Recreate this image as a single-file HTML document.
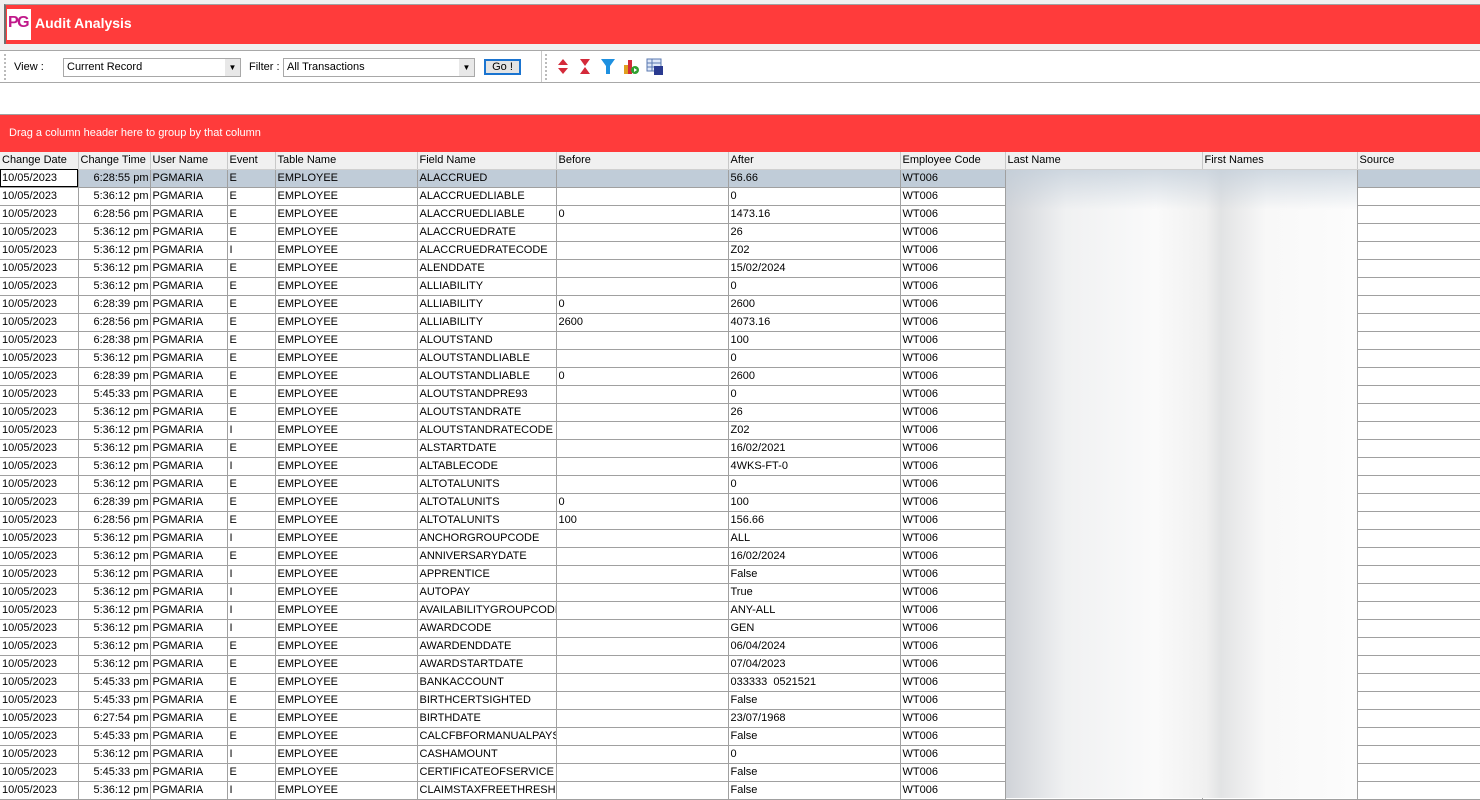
<!DOCTYPE html>
<html><head><meta charset="utf-8"><style>
*{margin:0;padding:0;box-sizing:border-box}
body{width:1480px;height:798px;overflow:hidden;background:#fff;font-family:"Liberation Sans",sans-serif;font-size:11px;color:#000;position:relative}
.abs{position:absolute}
table{border-collapse:collapse;table-layout:fixed;position:absolute;left:0;top:152px;width:1480px}
td,th{height:18px;border-right:1px solid #a0a0a0;border-bottom:1px solid #a0a0a0;padding:0 2px;white-space:nowrap;overflow:hidden;font-weight:normal;text-align:left;line-height:17px}
th{background:#f0f0f0;border-right:1px solid #c8c8c8;border-bottom:1px solid #d0d0d0;height:17px;line-height:16px}
td.r{text-align:right;padding-right:1px}
tr.sel td{background:#c0ccd8}
tr.sel td.d{background:#fff;outline:1px solid #000;outline-offset:-1px}
</style></head><body>
<div class="abs" style="left:0;top:0;width:1480px;height:50px;background:#f0f0f0"></div>
<div class="abs" style="left:4px;top:4px;width:1476px;height:40px;background:#ff3b3b;border-left:2px solid #707070;border-top:1px solid #a0a0a0"></div>
<div class="abs" style="left:7px;top:9px;width:24px;height:31px;background:#fff"></div>
<div class="abs" style="left:8px;top:14px;font-size:16px;font-weight:bold;color:#c0188a;letter-spacing:-1.5px">PG</div>
<div class="abs" style="left:35px;top:15px;font-size:14px;font-weight:bold;color:#fff">Audit Analysis</div>
<div class="abs" style="left:0;top:50px;width:1480px;height:33px;background:#fff;border-top:1px solid #a8a8a8;border-bottom:1px solid #a8a8a8"></div>
<div class="abs" style="left:4px;top:54px;height:26px;border-left:2px dotted #bbb"></div>
<div class="abs" style="left:14px;top:61px;font-size:11px">View :</div>
<div class="abs" style="left:63px;top:58px;width:178px;height:19px;border:1px solid #a8a8a8;background:#fff;padding:2px 3px">Current Record</div>
<div class="abs" style="left:225px;top:59px;width:15px;height:17px;background:#e8e8e8;font-size:8px;text-align:center;line-height:17px">▼</div>
<div class="abs" style="left:249px;top:61px">Filter :</div>
<div class="abs" style="left:283px;top:58px;width:192px;height:19px;border:1px solid #a8a8a8;background:#fff;padding:2px 3px">All Transactions</div>
<div class="abs" style="left:459px;top:59px;width:15px;height:17px;background:#e8e8e8;font-size:8px;text-align:center;line-height:17px">▼</div>
<div class="abs" style="left:484px;top:59px;width:37px;height:16px;border:2px solid #1a74d0;background:#e4e4e4;text-align:center;line-height:12px">Go !</div>
<div class="abs" style="left:541px;top:51px;height:31px;border-left:1px solid #c8c8c8"></div>
<div class="abs" style="left:545px;top:54px;height:26px;border-left:2px dotted #bbb"></div>
<svg class="abs" style="left:555px;top:57px" width="115" height="20">
<path d="M8 2 L13 8 L3 8 Z M3 11 L13 11 L8 17 Z" fill="#d42a3a"/>
<path d="M25 2 L35 2 L30 9 Z M30 10 L35 17 L25 17 Z" fill="#d42a3a"/>
<path d="M46 2 L60 2 L55 9 L55 17 L51 17 L51 9 Z" fill="#1e90e0"/>
<rect x="69" y="8" width="4" height="9" fill="#e0a020"/><rect x="73" y="3" width="4" height="14" fill="#d42a3a"/><circle cx="80" cy="13" r="4" fill="#30a030"/><path d="M79 11 L82 13 L79 15Z" fill="#fff"/>
<rect x="92" y="2" width="14" height="12" fill="#dfe8f8" stroke="#5a78b0"/><path d="M92 6 H106 M92 10 H106 M97 2 V14" stroke="#5a78b0"/><rect x="99" y="9" width="9" height="9" fill="#2a3a90"/>
</svg>
<div class="abs" style="left:0;top:114px;width:1480px;height:38px;background:#ff3b3b;border-top:1px solid #a0a0a0"></div>
<div class="abs" style="left:9px;top:127px;color:#fff">Drag a column header here to group by that column</div>
<table>
<colgroup><col style="width:78px"><col style="width:72px"><col style="width:77px"><col style="width:48px"><col style="width:142px"><col style="width:139px"><col style="width:172px"><col style="width:172px"><col style="width:105px"><col style="width:197px"><col style="width:155px"><col style="width:123px"></colgroup>
<tr><th>Change Date</th><th>Change Time</th><th>User Name</th><th>Event</th><th>Table Name</th><th>Field Name</th><th>Before</th><th>After</th><th>Employee Code</th><th>Last Name</th><th>First Names</th><th>Source</th></tr>
<tr class="sel"><td class="d">10/05/2023</td><td class="r">6:28:55 pm</td><td>PGMARIA</td><td>E</td><td>EMPLOYEE</td><td>ALACCRUED</td><td></td><td>56.66</td><td>WT006</td><td></td><td></td><td></td></tr>
<tr><td>10/05/2023</td><td class="r">5:36:12 pm</td><td>PGMARIA</td><td>E</td><td>EMPLOYEE</td><td>ALACCRUEDLIABLE</td><td></td><td>0</td><td>WT006</td><td></td><td></td><td></td></tr>
<tr><td>10/05/2023</td><td class="r">6:28:56 pm</td><td>PGMARIA</td><td>E</td><td>EMPLOYEE</td><td>ALACCRUEDLIABLE</td><td>0</td><td>1473.16</td><td>WT006</td><td></td><td></td><td></td></tr>
<tr><td>10/05/2023</td><td class="r">5:36:12 pm</td><td>PGMARIA</td><td>E</td><td>EMPLOYEE</td><td>ALACCRUEDRATE</td><td></td><td>26</td><td>WT006</td><td></td><td></td><td></td></tr>
<tr><td>10/05/2023</td><td class="r">5:36:12 pm</td><td>PGMARIA</td><td>I</td><td>EMPLOYEE</td><td>ALACCRUEDRATECODE</td><td></td><td>Z02</td><td>WT006</td><td></td><td></td><td></td></tr>
<tr><td>10/05/2023</td><td class="r">5:36:12 pm</td><td>PGMARIA</td><td>E</td><td>EMPLOYEE</td><td>ALENDDATE</td><td></td><td>15/02/2024</td><td>WT006</td><td></td><td></td><td></td></tr>
<tr><td>10/05/2023</td><td class="r">5:36:12 pm</td><td>PGMARIA</td><td>E</td><td>EMPLOYEE</td><td>ALLIABILITY</td><td></td><td>0</td><td>WT006</td><td></td><td></td><td></td></tr>
<tr><td>10/05/2023</td><td class="r">6:28:39 pm</td><td>PGMARIA</td><td>E</td><td>EMPLOYEE</td><td>ALLIABILITY</td><td>0</td><td>2600</td><td>WT006</td><td></td><td></td><td></td></tr>
<tr><td>10/05/2023</td><td class="r">6:28:56 pm</td><td>PGMARIA</td><td>E</td><td>EMPLOYEE</td><td>ALLIABILITY</td><td>2600</td><td>4073.16</td><td>WT006</td><td></td><td></td><td></td></tr>
<tr><td>10/05/2023</td><td class="r">6:28:38 pm</td><td>PGMARIA</td><td>E</td><td>EMPLOYEE</td><td>ALOUTSTAND</td><td></td><td>100</td><td>WT006</td><td></td><td></td><td></td></tr>
<tr><td>10/05/2023</td><td class="r">5:36:12 pm</td><td>PGMARIA</td><td>E</td><td>EMPLOYEE</td><td>ALOUTSTANDLIABLE</td><td></td><td>0</td><td>WT006</td><td></td><td></td><td></td></tr>
<tr><td>10/05/2023</td><td class="r">6:28:39 pm</td><td>PGMARIA</td><td>E</td><td>EMPLOYEE</td><td>ALOUTSTANDLIABLE</td><td>0</td><td>2600</td><td>WT006</td><td></td><td></td><td></td></tr>
<tr><td>10/05/2023</td><td class="r">5:45:33 pm</td><td>PGMARIA</td><td>E</td><td>EMPLOYEE</td><td>ALOUTSTANDPRE93</td><td></td><td>0</td><td>WT006</td><td></td><td></td><td></td></tr>
<tr><td>10/05/2023</td><td class="r">5:36:12 pm</td><td>PGMARIA</td><td>E</td><td>EMPLOYEE</td><td>ALOUTSTANDRATE</td><td></td><td>26</td><td>WT006</td><td></td><td></td><td></td></tr>
<tr><td>10/05/2023</td><td class="r">5:36:12 pm</td><td>PGMARIA</td><td>I</td><td>EMPLOYEE</td><td>ALOUTSTANDRATECODE</td><td></td><td>Z02</td><td>WT006</td><td></td><td></td><td></td></tr>
<tr><td>10/05/2023</td><td class="r">5:36:12 pm</td><td>PGMARIA</td><td>E</td><td>EMPLOYEE</td><td>ALSTARTDATE</td><td></td><td>16/02/2021</td><td>WT006</td><td></td><td></td><td></td></tr>
<tr><td>10/05/2023</td><td class="r">5:36:12 pm</td><td>PGMARIA</td><td>I</td><td>EMPLOYEE</td><td>ALTABLECODE</td><td></td><td>4WKS-FT-0</td><td>WT006</td><td></td><td></td><td></td></tr>
<tr><td>10/05/2023</td><td class="r">5:36:12 pm</td><td>PGMARIA</td><td>E</td><td>EMPLOYEE</td><td>ALTOTALUNITS</td><td></td><td>0</td><td>WT006</td><td></td><td></td><td></td></tr>
<tr><td>10/05/2023</td><td class="r">6:28:39 pm</td><td>PGMARIA</td><td>E</td><td>EMPLOYEE</td><td>ALTOTALUNITS</td><td>0</td><td>100</td><td>WT006</td><td></td><td></td><td></td></tr>
<tr><td>10/05/2023</td><td class="r">6:28:56 pm</td><td>PGMARIA</td><td>E</td><td>EMPLOYEE</td><td>ALTOTALUNITS</td><td>100</td><td>156.66</td><td>WT006</td><td></td><td></td><td></td></tr>
<tr><td>10/05/2023</td><td class="r">5:36:12 pm</td><td>PGMARIA</td><td>I</td><td>EMPLOYEE</td><td>ANCHORGROUPCODE</td><td></td><td>ALL</td><td>WT006</td><td></td><td></td><td></td></tr>
<tr><td>10/05/2023</td><td class="r">5:36:12 pm</td><td>PGMARIA</td><td>E</td><td>EMPLOYEE</td><td>ANNIVERSARYDATE</td><td></td><td>16/02/2024</td><td>WT006</td><td></td><td></td><td></td></tr>
<tr><td>10/05/2023</td><td class="r">5:36:12 pm</td><td>PGMARIA</td><td>I</td><td>EMPLOYEE</td><td>APPRENTICE</td><td></td><td>False</td><td>WT006</td><td></td><td></td><td></td></tr>
<tr><td>10/05/2023</td><td class="r">5:36:12 pm</td><td>PGMARIA</td><td>I</td><td>EMPLOYEE</td><td>AUTOPAY</td><td></td><td>True</td><td>WT006</td><td></td><td></td><td></td></tr>
<tr><td>10/05/2023</td><td class="r">5:36:12 pm</td><td>PGMARIA</td><td>I</td><td>EMPLOYEE</td><td>AVAILABILITYGROUPCODI</td><td></td><td>ANY-ALL</td><td>WT006</td><td></td><td></td><td></td></tr>
<tr><td>10/05/2023</td><td class="r">5:36:12 pm</td><td>PGMARIA</td><td>I</td><td>EMPLOYEE</td><td>AWARDCODE</td><td></td><td>GEN</td><td>WT006</td><td></td><td></td><td></td></tr>
<tr><td>10/05/2023</td><td class="r">5:36:12 pm</td><td>PGMARIA</td><td>E</td><td>EMPLOYEE</td><td>AWARDENDDATE</td><td></td><td>06/04/2024</td><td>WT006</td><td></td><td></td><td></td></tr>
<tr><td>10/05/2023</td><td class="r">5:36:12 pm</td><td>PGMARIA</td><td>E</td><td>EMPLOYEE</td><td>AWARDSTARTDATE</td><td></td><td>07/04/2023</td><td>WT006</td><td></td><td></td><td></td></tr>
<tr><td>10/05/2023</td><td class="r">5:45:33 pm</td><td>PGMARIA</td><td>E</td><td>EMPLOYEE</td><td>BANKACCOUNT</td><td></td><td>033333&nbsp;&nbsp;0521521</td><td>WT006</td><td></td><td></td><td></td></tr>
<tr><td>10/05/2023</td><td class="r">5:45:33 pm</td><td>PGMARIA</td><td>E</td><td>EMPLOYEE</td><td>BIRTHCERTSIGHTED</td><td></td><td>False</td><td>WT006</td><td></td><td></td><td></td></tr>
<tr><td>10/05/2023</td><td class="r">6:27:54 pm</td><td>PGMARIA</td><td>E</td><td>EMPLOYEE</td><td>BIRTHDATE</td><td></td><td>23/07/1968</td><td>WT006</td><td></td><td></td><td></td></tr>
<tr><td>10/05/2023</td><td class="r">5:45:33 pm</td><td>PGMARIA</td><td>E</td><td>EMPLOYEE</td><td>CALCFBFORMANUALPAYS</td><td></td><td>False</td><td>WT006</td><td></td><td></td><td></td></tr>
<tr><td>10/05/2023</td><td class="r">5:36:12 pm</td><td>PGMARIA</td><td>I</td><td>EMPLOYEE</td><td>CASHAMOUNT</td><td></td><td>0</td><td>WT006</td><td></td><td></td><td></td></tr>
<tr><td>10/05/2023</td><td class="r">5:45:33 pm</td><td>PGMARIA</td><td>E</td><td>EMPLOYEE</td><td>CERTIFICATEOFSERVICE</td><td></td><td>False</td><td>WT006</td><td></td><td></td><td></td></tr>
<tr><td>10/05/2023</td><td class="r">5:36:12 pm</td><td>PGMARIA</td><td>I</td><td>EMPLOYEE</td><td>CLAIMSTAXFREETHRESH</td><td></td><td>False</td><td>WT006</td><td></td><td></td><td></td></tr>
</table>
<div class="abs" style="left:1006px;top:170px;width:351px;height:628px;background:linear-gradient(to right,#d0d3d8 0px,#f0f1f2 60px,#fafafa 150px,#f0f0f0 200px,#e2e3e4 215px,#f8f8f8 260px,#fcfcfc 351px)"></div>
<div class="abs" style="left:1006px;top:170px;width:351px;height:40px;background:linear-gradient(to bottom,rgba(192,204,216,0.7),rgba(255,255,255,0))"></div>
</body></html>
